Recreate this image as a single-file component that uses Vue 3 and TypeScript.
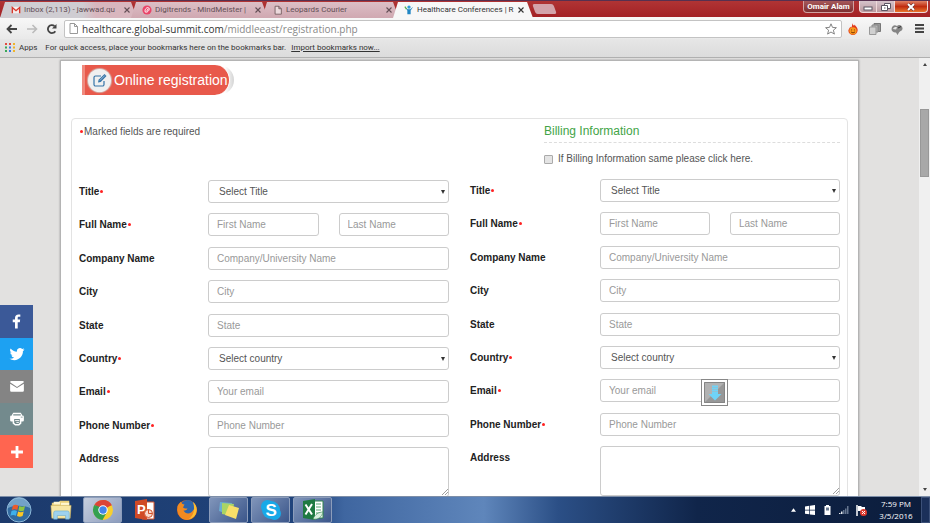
<script setup lang="ts">
import { ref } from 'vue'

interface Tab {
  title: string
  icon: 'gmail' | 'mind' | 'page' | 'health'
  active?: boolean
}

interface Field {
  key: string
  label: string
  kind: 'select' | 'name' | 'text' | 'area'
  hint: string
  required?: boolean
}

interface Column {
  id: string
  billing: boolean
}

const tabs: Tab[] = [
  { title: 'Inbox (2,113) - jawwad.qu', icon: 'gmail' },
  { title: 'Digitrends - MindMeister |', icon: 'mind' },
  { title: 'Leopards Courier', icon: 'page' },
  { title: 'Healthcare Conferences | R', icon: 'health', active: true },
]

const fields: Field[] = [
  { key: 'title', label: 'Title', kind: 'select', hint: 'Select Title', required: true },
  { key: 'name', label: 'Full Name', kind: 'name', hint: 'First Name', required: true },
  { key: 'company', label: 'Company Name', kind: 'text', hint: 'Company/University Name' },
  { key: 'city', label: 'City', kind: 'text', hint: 'City' },
  { key: 'state', label: 'State', kind: 'text', hint: 'State' },
  { key: 'country', label: 'Country', kind: 'select', hint: 'Select country', required: true },
  { key: 'email', label: 'Email', kind: 'text', hint: 'Your email', required: true },
  { key: 'phone', label: 'Phone Number', kind: 'text', hint: 'Phone Number', required: true },
  { key: 'address', label: 'Address', kind: 'area', hint: '' },
]

const columns: Column[] = [
  { id: 'contact', billing: false },
  { id: 'billing', billing: true },
]

const dots = ['#e04a3f', '#e04a3f', '#f0b429', '#3aa757', '#3b78e7', '#f0b429', '#3aa757', '#3b78e7', '#f0b429']
const sameBilling = ref(false)
const url = 'healthcare.global-summit.com'
const path = '/middleeast/registration.php'
</script>

<template>
  <div class="window">
    <header class="chrome">
      <div class="tabstrip">
        <div v-for="tab in tabs" :key="tab.title" class="tab" :class="{ active: tab.active }">
          <svg v-if="tab.icon === 'gmail'" class="fav" viewBox="0 0 12 12"><path d="M1 2h10v8H1z" fill="#f4eeee" /><path d="M1.6 10V3L6 6.800 10.400 3v7" fill="none" stroke="#d8392e" stroke-width="1.700" /></svg>
          <svg v-else-if="tab.icon === 'mind'" class="fav" viewBox="0 0 12 12"><circle cx="6" cy="6" r="5.500" fill="#ea4468" /><path d="M4 8.500C2.500 5.500 6 2 8 3.500S7 9.500 4 8.500zM5.500 7.500l2-3" fill="none" stroke="#fff" stroke-width="1.200" /></svg>
          <svg v-else-if="tab.icon === 'page'" class="fav" viewBox="0 0 12 12"><path d="M2.500 1.500h4.500l3 3v6.500h-7.500zM7 1.500v3h3" fill="#ecd9dc" stroke="#6d5559" /></svg>
          <svg v-else class="fav" viewBox="0 0 12 12"><circle cx="6" cy="2.500" r="2" fill="#2e9bd6" /><path d="M1 2l3 4.500V11h4V6.500L11 2 7.500 5h-3z" fill="#2086c4" /><path d="M1 2l2 3" stroke="#54b44a" stroke-width="1.500" /></svg>
          <span class="tab-title">{{ tab.title }}</span>
          <button class="tab-close" :aria-label="`Close ${tab.title}`">
            <svg viewBox="0 0 6 6"><path d="M.5.5l5 5M5.500.5l-5 5" stroke="currentColor" stroke-width="1.100" /></svg>
          </button>
        </div>
        <button class="new-tab" aria-label="New tab"></button>
        <div class="controls">
          <button class="profile">Omair Alam</button>
          <button class="ctl first" aria-label="Minimize"><svg viewBox="0 0 10 8"><rect x="1" y="4" width="8" height="3" fill="#fff" stroke="#5b5562" /></svg></button>
          <button class="ctl" aria-label="Restore"><svg viewBox="0 0 10 8"><path d="M3.500.5h6v5h-6z" fill="#fff" stroke="#5b5562" /><path d="M.5 2.500h6v5h-6z" fill="#fff" stroke="#5b5562" /><path d="M3 4.500h1.500v1H3z" fill="#5b5562" /></svg></button>
          <button class="ctl shut" aria-label="Close"><svg viewBox="0 0 10 8"><path d="M2 1l6 6M8 1L2 7" stroke="#5a2a2a" stroke-width="3" /><path d="M2 1l6 6M8 1L2 7" stroke="#fff" stroke-width="2" /></svg></button>
        </div>
      </div>
      <div class="toolbar">
        <button class="nav" aria-label="Back"><svg viewBox="0 0 12 10"><path d="M11 5H2M5.500 1L1.500 5l4 4" fill="none" stroke="#444" stroke-width="1.800" /></svg></button>
        <button class="nav" aria-label="Forward"><svg viewBox="0 0 12 10"><path d="M1 5h9M6.500 1l4 4-4 4" fill="none" stroke="#bbb" stroke-width="1.600" /></svg></button>
        <button class="nav" aria-label="Reload"><svg viewBox="0 0 12 10"><path d="M9.300 7.200A4 4 0 1 1 8.500 2" fill="none" stroke="#444" stroke-width="1.800" /><path d="M10.500 0v4.500H6z" fill="#444" /></svg></button>
        <div class="omnibox">
          <svg class="doc" viewBox="0 0 9 11"><path d="M1 .5h4.500L8.500 3.500v7H1zM5.500.5v3h3" fill="#fff" stroke="#999" /></svg>
          <span class="url"><b>{{ url }}</b>{{ path }}</span>
          <svg class="star" viewBox="0 0 12 12"><path d="M6 .8l1.500 3.600 3.900.3-3 2.500 1 3.900L6 9l-3.400 2.100 1-3.900-3-2.500 3.900-.3z" fill="#fff" stroke="#777" stroke-width=".9" /></svg>
        </div>
        <svg class="ext" viewBox="0 0 12 13"><path d="M5 0c.5 2 1.500 2.300 2 3 .6-.6.500-1 .500-1.500C10 4 11.500 6 11 8.500 10.500 11.500 8.500 13 6 13S1 11.500 1 8.500C1 6.500 2.500 5.500 3 4c.5.500.7.800.7 1.300C5 4 5.300 2 5 0z" fill="#e2371b" /><circle cx="6" cy="8.500" r="4" fill="#f79a1c" /><path d="M4 7.500h1M7 7.500h1M3.800 9.500c1.200 1.500 3.200 1.500 4.400 0" stroke="#7a2b00" fill="none" /></svg>
        <svg class="ext" viewBox="0 0 12 12"><path d="M5 .5h6.500v8H5z" fill="#999" stroke="#777" /><path d="M3 2h6v7H3z" fill="#b5b5b5" stroke="#888" /><path d="M.5 4h6.500v7.500H.5z" fill="#d0d0d0" stroke="#999" /></svg>
        <svg class="ext" viewBox="0 0 12 12"><path d="M.5 6C1 2 4 1.500 6 3c2-2 5-.5 5.500 2S9 8 8 9.500L6.500 12 5 9.500C3 10 .5 8.500.5 6z" fill="#858585" /><path d="M2 6c1-2 3-2.500 4-1.500L5 6.500z" fill="#e5e5e5" /><path d="M7 5l3-1.500" stroke="#333" /></svg>
        <button class="menu" aria-label="Menu"><svg viewBox="0 0 9 9"><path d="M0 1h9M0 4.500h9M0 8h9" stroke="#444" stroke-width="1.800" /></svg></button>
      </div>
      <div class="bookmarks">
        <svg class="apps" viewBox="0 0 10 9">
          <rect v-for="(c, i) in dots" :key="i" :x="(i % 3) * 4" :y="Math.floor(i / 3) * 3.5" width="2" height="2" :fill="c" />
        </svg>
        <span class="apps-label">Apps</span>
        <span>For quick access, place your bookmarks here on the bookmarks bar.</span>
        <a href="#import">Import bookmarks now...</a>
      </div>
    </header>

    <div class="viewport">
      <main class="page">
        <section class="card">
          <h1 class="badge">
            <span class="badge-body">
              <span class="badge-icon">
                <svg viewBox="0 0 16 16"><path d="M12 9v3.500a1.500 1.500 0 0 1-1.500 1.500h-7A1.500 1.500 0 0 1 2 12.500v-7A1.500 1.500 0 0 1 3.500 4H9" fill="none" stroke="#3474a8" stroke-width="1.200" /><path d="M6 10.500l.6-2.700L12.500 2l2 2-5.800 5.900z" fill="#3474a8" /><path d="M7.800 8.500l5-5" stroke="#d9e8f3" stroke-width=".6" /></svg>
              </span>
              Online registration
            </span>
          </h1>
          <form class="form" @submit.prevent>
            <div v-for="col in columns" :key="col.id" class="col" :class="col.id">
              <div v-if="!col.billing" class="intro"><i class="dot"></i>Marked fields are required</div>
              <div v-else class="intro offset">
                <h2>Billing Information</h2>
                <label class="same"><input v-model="sameBilling" type="checkbox" />If Billing Information same please click here.</label>
              </div>
              <div class="rows">
                <div v-for="f in fields" :key="f.key" class="row" :class="f.kind">
                  <label :for="`${col.id}-${f.key}`">{{ f.label }}<i v-if="f.required" class="dot"></i></label>
                  <div v-if="f.kind === 'select'" class="control pick">
                    <select :id="`${col.id}-${f.key}`"><option>{{ f.hint }}</option></select>
                  </div>
                  <div v-else-if="f.kind === 'name'" class="control pair">
                    <input :id="`${col.id}-${f.key}`" type="text" :placeholder="f.hint" />
                    <input type="text" placeholder="Last Name" aria-label="Last Name" />
                  </div>
                  <div v-else-if="f.kind === 'area'" class="control">
                    <textarea :id="`${col.id}-${f.key}`"></textarea>
                    <svg class="grip" viewBox="0 0 6 6"><path d="M0 6l6-6M3 6l3-3" stroke="#888" stroke-width=".8" /></svg>
                  </div>
                  <div v-else class="control">
                    <input :id="`${col.id}-${f.key}`" type="text" :placeholder="f.hint" />
                    <span v-if="col.billing && f.key === 'email'" class="marker">
                      <svg viewBox="0 0 21 21"><path d="M0 0h21v21H0z" fill="#989898" /><path d="M0 0h21L0 21z" fill="#b2b2b2" /><path d="M.5.5h20v20H.5z" fill="none" stroke="#858585" /><path d="M8 3.500h6V12h3.500l-6.500 6.500L4.500 12H8z" fill="#6fd3f7" /><path d="M8 5.500h6M8 7.500h6M8 9.500h6" stroke="#9db9c4" stroke-width=".6" /></svg>
                    </span>
                  </div>
                </div>
              </div>
            </div>
          </form>
        </section>
      </main>
      <div class="scrollbar">
        <i class="up"></i>
        <i class="thumb"></i>
        <i class="down"></i>
      </div>
      <nav class="share">
        <a href="#facebook" class="fb" aria-label="Facebook"><svg viewBox="4 4 24 24"><path d="M17.700 26v-9h3l.5-3.700h-3.500v-2.200c0-1 .3-1.800 1.800-1.800h1.900V6.100C21 6 20 6 18.700 6c-2.900 0-4.800 1.700-4.800 4.900v2.400h-3.200V17h3.200v9z" fill="#fff" /></svg></a>
        <a href="#twitter" class="tw" aria-label="Twitter"><svg viewBox="0 0 32 32"><path d="M28 8.600a9.900 9.900 0 0 1-2.800.8 5 5 0 0 0 2.200-2.700c-1 .6-2 1-3.100 1.200a4.900 4.900 0 0 0-8.500 3.300c0 .4 0 .8.1 1.100-4-.2-7.700-2.100-10.100-5.100a4.900 4.900 0 0 0 1.500 6.600c-.8 0-1.500-.2-2.200-.6v.1a4.900 4.900 0 0 0 3.900 4.800c-.7.200-1.400.2-2.200.1a5 5 0 0 0 4.600 3.400A9.900 9.900 0 0 1 4 23.600 13.900 13.900 0 0 0 11.500 25.800c9.100 0 14.300-7.700 14.000-14.600a10 10 0 0 0 2.500-2.600z" fill="#fff" /></svg></a>
        <a href="#mail" class="ml" aria-label="Email"><svg viewBox="0 0 32 32"><path d="M5 10a2 2 0 0 1 2-2h18a2 2 0 0 1 2 2L16 17.500z" fill="#fff" /><path d="M5 12.200l11 7 11-7V23a2 2 0 0 1-2 2H7a2 2 0 0 1-2-2z" fill="#fff" /></svg></a>
        <a href="#print" class="pr" aria-label="Print"><svg viewBox="0 0 32 32"><path d="M10 6h12l2 3v2h-2V8.500H10V11H8V9z" fill="#fff" /><path d="M7 10.500h18a2 2 0 0 1 2 2V18a2 2 0 0 1-2 2h-2v3l-3.500 3.500H13L9 23v-3H7a2 2 0 0 1-2-2v-5.500a2 2 0 0 1 2-2z" fill="#fff" /><path d="M11.500 16h9v6l-2 2h-5l-2-2z" fill="#738a8d" /><path d="M13 18.500h6.500M15 21.500h4" stroke="#fff" stroke-width="1.400" /><path d="M22 13h3" stroke="#738a8d" stroke-width="1.200" /></svg></a>
        <a href="#more" class="mo" aria-label="More"><svg viewBox="0 0 32 32"><path d="M16 6.500v19M6.500 16h19" stroke="#fff" stroke-width="4.500" /></svg></a>
      </nav>
    </div>

    <footer class="taskbar">
      <button class="task start" aria-label="Start">
        <svg viewBox="0 0 26 26"><circle cx="13" cy="13" r="12" fill="#326ba0" stroke="#8db8d8" /><path d="M2 11a11 11 0 0 1 22 0c-6-3-16-3-22 0z" fill="#8fb9d8" opacity=".7" /><path d="M7 8.500c2-1.200 3.500-1 5.300 0L11.300 13c-2-1-3.500-1-5.500 0z" fill="#ee5a28" /><path d="M13.300 8.900c2 1 3.700 1 5.700 0L18 13.500c-2 1-3.700 1-5.600 0z" fill="#8ec641" /><path d="M5.500 14c2-1 3.600-1 5.500 0l-1.100 4.700c-2-1-3.600-1-5.500 0z" fill="#3fb0ea" /><path d="M12.100 14.500c2 1 3.600 1 5.600 0l-1.100 4.600c-2 1-3.600 1-5.600 0z" fill="#fdc824" /></svg>
      </button>
      <button class="task" aria-label="Explorer">
        <svg viewBox="0 0 24 22"><path d="M2 3h7l2-2h10v18H2z" fill="#ead07a" /><path d="M4 2h7v3H4zM12 3h9v3h-9z" fill="#fff6cf" /><path d="M1 6h22l-1 14H2z" fill="#f8e7a4" stroke="#ceb058" stroke-width=".6" /><path d="M4 21v-7a2 2 0 0 1 2-2h13a2 2 0 0 1 2 2v7h-4v-4H8v4z" fill="#9ed2ee" stroke="#61a7cc" stroke-width=".6" /></svg>
      </button>
      <button class="task open current" aria-label="Chrome">
        <svg viewBox="0 0 22 22"><circle cx="11" cy="11" r="10" fill="#f7cf2f" /><path d="M11 11L2.300 6A10 10 0 0 1 19.700 6z" fill="#dc4437" /><path d="M11 1a10 10 0 0 1 8.700 5.500H11z" fill="#dc4437" /><path d="M2.300 6A10 10 0 0 0 10.500 21l4.500-8-4 2z" fill="#34a050" /><path d="M2.300 6l4.800 8 3.900 1v-6z" fill="#34a050" /><circle cx="11" cy="11" r="4.700" fill="#fff" /><circle cx="11" cy="11" r="3.700" fill="#4384ea" /></svg>
      </button>
      <button class="task" aria-label="PowerPoint">
        <svg viewBox="0 0 22 22"><path d="M8 3h12v17H8z" fill="#fff" stroke="#d4532b" /><path d="M1 2l12-2v21L1 19z" fill="#d04a25" /><text x="3" y="15" class="glyph">P</text><circle cx="14.500" cy="14.500" r="4" fill="#f7d9cd" stroke="#d4532b" /><path d="M14.500 10.500v4h4" fill="none" stroke="#d4532b" /></svg>
      </button>
      <button class="task" aria-label="Firefox">
        <svg viewBox="0 0 22 22"><circle cx="11" cy="11" r="10" fill="#e66b1e" /><circle cx="11.500" cy="8.500" r="7.500" fill="#2d65ad" /><path d="M1.500 7C3 4 4 4 5 2.500c.5 2 1.500 3 3.500 3L7 8.500c1 1 3 1 4.500 1-1 2-2.500 2-4 2 2 4 7 4 9.500 0l3-4c2 8-3 13.500-9 13.500S.5 15 1.500 7z" fill="#f18a21" /><path d="M17 3c4 3 5 9 1.500 14-2 2-4 3-6 3 5-3 7-9 4.500-17z" fill="#fbbd31" /></svg>
      </button>
      <button class="task open" aria-label="Sticky Notes">
        <svg viewBox="0 0 22 22"><path d="M2 3l12 1-2 12L1 12z" fill="#6aaed2" /><path d="M4 4l12 1-2 12-10-2z" fill="#a9d465" /><path d="M11 6l10 3-3 11-11-4z" fill="#f8df69" /></svg>
      </button>
      <button class="task open" aria-label="Skype">
        <svg viewBox="0 0 22 22"><circle cx="7.500" cy="7.500" r="6.500" fill="#18a9e8" /><circle cx="14.500" cy="14.500" r="6.500" fill="#18a9e8" /><circle cx="11" cy="11" r="9" fill="#18a9e8" /><text x="5.500" y="17" class="glyph big">S</text></svg>
      </button>
      <button class="task open" aria-label="Excel">
        <svg viewBox="0 0 22 22"><path d="M8 2h13v17H8z" fill="#fff" stroke="#30844e" /><path d="M14 5h5M14 8h5M14 11h5M14 14h5" stroke="#5aa774" /><path d="M1 2l12-2v21L1 19z" fill="#1f7a42" /><path d="M3.500 5.500l6.500 10M10 5l-6.500 10.500" stroke="#fff" stroke-width="2" /><path d="M11 20c2-5 6-7 10-7-1 5-5 8-10 7z" fill="#d9efdf" stroke="#30844e" stroke-width=".6" /></svg>
      </button>
      <div class="tray">
        <svg class="t-up" viewBox="0 0 6 4"><path d="M3 0l3 4H0z" fill="#fff" /></svg>
        <svg class="t-win" viewBox="0 0 10 10"><path d="M0 1.500l4.300-.7v4H0zM5 .7L10 0v4.800H5zM0 5.500h4.300v3.800L0 8.700zM5 5.500h5V10l-5-.6z" fill="#fff" /></svg>
        <svg class="t-bat" viewBox="0 0 7 10"><path d="M2 0h3v1h1.500v9h-6V1H2z" fill="#fff" /><path d="M2 2.500h3v3H2z" fill="#6b7b92" /></svg>
        <svg class="t-net" viewBox="0 0 10 8"><path d="M0 8V7h1.500v1zM2 8V5.500h1.500V8z" fill="#e6e9ee" /><path d="M4 8V4h1.500v4zM6 8V2.500h1.500V8zM8 8V0h1.500v8z" fill="#65758f" /></svg>
        <svg class="t-flag" viewBox="0 0 11 11"><path d="M1 0v11" stroke="#fff" stroke-width="1.500" /><path d="M2 1h3l1 1h3v5H6L5 6H2z" fill="#fff" /><circle cx="7.500" cy="7.500" r="3.500" fill="#dd3a2e" /><path d="M6 6l3 3M9 6L6 9" stroke="#fff" /></svg>
        <time class="clock"><span>7:59 PM</span><span>3/5/2016</span></time>
        <span class="peek"></span>
      </div>
    </footer>
  </div>
</template>

<style>
body {
  margin: 0;
}
</style>

<style scoped>
* {
  box-sizing: border-box;
}
button {
  padding: 0;
  border: 0;
  background: none;
  font: inherit;
  color: inherit;
}
svg {
  display: block;
}
.window {
  display: flex;
  flex-direction: column;
  height: 100vh;
  overflow: hidden;
  font-family: 'Liberation Sans', Arial, sans-serif;
  font-size: 10px;
  color: #555;
}
.chrome {
  flex: none;
  font-family: Roboto, 'Open Sans', sans-serif;
  font-size: 8px;
  color: #333;
}
.tabstrip {
  display: flex;
  height: 17px;
  padding-top: 1px;
  border-top: 1px solid #57304f;
  background: linear-gradient(#b03434, #a32125);
}
.tab {
  display: flex;
  align-items: center;
  flex: 0 1 137px;
  min-width: 0;
  height: 16px;
  margin-right: -6px;
  padding: 0 7px 1px 11px;
  background: linear-gradient(#dcbfc6, #d0a8b1);
  clip-path: polygon(5px 0, calc(100% - 6px) 0, 100% 100%, 0 100%);
  color: #634e55;
}
.tab:first-child {
  background: linear-gradient(90deg, #cfcdd2 60%, #d8b6be 70%);
}
.tab.active {
  flex-basis: 140px;
  padding-right: 9px;
  background: #f7f7f7;
  color: #333;
}
.fav {
  flex: none;
  width: 10px;
  height: 10px;
  margin-right: 3px;
}
.tab-title {
  flex: 1;
  white-space: nowrap;
}
.tab-close {
  flex: none;
  width: 6px;
  height: 6px;
}
.new-tab {
  width: 21px;
  height: 10px;
  margin: 2px 0 0 7px;
  border-radius: 2px;
  background: #d3a3aa;
  transform: skewX(20deg);
}
.controls {
  display: flex;
  height: 12px;
  margin: -1px 2px 0 auto;
}
.profile {
  width: 51px;
  margin-right: 5px;
  border: 1px solid #d0a2a2;
  border-top: 0;
  border-radius: 0 0 4px 4px;
  background: linear-gradient(#a7595b, #7d2e30);
  font-weight: 700;
  font-size: 8px;
  line-height: 10px;
  color: #fff;
}
.ctl {
  display: grid;
  place-items: center;
  width: 18px;
  border: 1px solid #f0d9da;
  border-width: 0 1px 1px 0;
  background: linear-gradient(#d5c3cb, #bb9a9f);
}
.ctl.first {
  border-left-width: 1px;
  border-radius: 0 0 0 4px;
}
.ctl.shut {
  width: 33px;
  border-radius: 0 0 4px 0;
  background: linear-gradient(#e08266, #c02c10 50%, #e8762c);
}
.ctl svg {
  width: 10px;
  height: 8px;
}
.toolbar {
  display: flex;
  align-items: center;
  height: 22px;
  padding: 2px 6px 1px 6px;
  background: linear-gradient(#f8f8f8, #e9e9e9);
}
.nav {
  width: 12px;
  height: 10px;
  margin-right: 8px;
}
.nav:nth-child(3) {
  margin-right: 6px;
}
.omnibox {
  display: flex;
  align-items: center;
  flex: 1;
  height: 18px;
  padding: 0 4px;
  border: 1px solid #c3c3c3;
  border-radius: 2px;
  background: #fff;
  margin-right: 5px;
}
.doc {
  width: 9px;
  height: 11px;
  margin-right: 4px;
}
.url {
  flex: 1;
  font-family: 'Open Sans', 'Noto Sans', sans-serif;
  font-size: 10px;
  line-height: 16px;
  color: #888;
}
.url b {
  font-weight: 400;
  color: #333;
}
.star {
  width: 12px;
  height: 12px;
}
.ext {
  width: 12px;
  height: 12px;
  margin-right: 10px;
}
.menu {
  width: 9px;
  height: 9px;
  margin-left: 2px;
}
.bookmarks {
  display: flex;
  align-items: center;
  height: 19px;
  padding: 0 5px 2px;
  border-bottom: 1px solid #b0b0b0;
  background: linear-gradient(#e6e6e6, #dcdcdc);
  white-space: nowrap;
}
.apps {
  width: 10px;
  height: 9px;
}
.apps-label {
  margin: 0 8px 0 4px;
}
.bookmarks a {
  margin-left: 5px;
  color: #333;
}
.viewport {
  position: relative;
  display: flex;
  flex: 1;
  min-height: 0;
}
.page {
  flex: 1;
  padding-top: 2px;
  background: #e2e1e0;
  overflow: hidden;
}
.card {
  max-width: 799px;
  margin: 0 auto;
  padding: 4px 10px 40px;
  border: 1px solid #b4b4b4;
  background: #fff;
  box-shadow: 0 0 2px #999;
}
.badge {
  display: flex;
  width: max-content;
  margin: 0 0 23px 11px;
  padding-right: 4px;
  border-radius: 0 16px 16px 0;
  background: linear-gradient(90deg, #fff 94%, #d4d4d4);
  font-size: 14px;
  font-weight: 400;
  line-height: 30px;
  color: #fff;
}
.badge-body {
  display: flex;
  align-items: center;
  height: 30px;
  padding: 0 1px 0 3px;
  border-left: 3px solid #f08a7e;
  border-right: 1px solid #fff;
  border-radius: 0 15px 15px 0;
  background: #e8594b;
}
.badge-icon {
  display: grid;
  place-items: center;
  width: 23px;
  height: 23px;
  margin-right: 3px;
  border-radius: 50%;
  background: #f0f0f0;
  box-shadow: 0 0 1px 1px #d5b0aa;
}
.badge-icon svg {
  width: 16px;
  height: 16px;
}
.form {
  display: grid;
  grid-template-columns: 1fr 1fr;
  gap: 21px;
  padding: 0 7px 20px;
  border: 1px solid #e3e3e3;
  border-radius: 4px;
}
.intro {
  height: 61px;
  padding-top: 6px;
  line-height: 14px;
}
.intro.offset {
  height: 60px;
  margin-left: 74px;
  padding-top: 5px;
}
.offset h2 {
  margin: 0 0 9px;
  padding-bottom: 3px;
  border-bottom: 1px dashed #ddd;
  font-size: 12px;
  font-weight: 400;
  line-height: 15px;
  color: #43a447;
}
.same {
  display: flex;
  align-items: center;
}
.same input {
  appearance: none;
  width: 9px;
  height: 9px;
  margin: 0 5px 0 0;
  border: 1px solid #aaa;
  border-radius: 1px;
  background: #e4e4e4;
}
.dot {
  display: inline-block;
  width: 3px;
  height: 3px;
  margin: 0 1px 2px;
  border-radius: 50%;
  background: #f22;
}
.rows {
  display: flex;
  flex-direction: column;
  justify-content: space-between;
  height: 317px;
}
.row {
  display: grid;
  grid-template-columns: 129px 1fr;
  align-items: center;
}
.billing .row {
  grid-template-columns: 130px 1fr;
}
.row > label {
  font-weight: 700;
  color: #222;
}
.row.area {
  align-items: start;
}
.row.area > label {
  padding-top: 6px;
}
.control {
  position: relative;
  display: grid;
}
.pair {
  grid-template-columns: 1fr 1fr;
  gap: 20px;
}
.control input,
.control select,
.control textarea {
  appearance: none;
  width: 100%;
  min-width: 0;
  height: 23px;
  margin: 0;
  padding: 0 8px;
  border: 1px solid #ccc;
  border-radius: 3px;
  background: #fff;
  font: inherit;
  color: #555;
}
.control select {
  padding: 0 10px;
}
.control textarea {
  height: 50px;
  resize: none;
}
.control input::placeholder {
  color: #999;
  opacity: 1;
}
.pick::after {
  content: '';
  position: absolute;
  top: 10px;
  right: 4px;
  border: 2px solid transparent;
  border-top: 4px solid #333;
  border-bottom: 0;
}
.grip {
  position: absolute;
  right: 1px;
  bottom: 2px;
  width: 6px;
  height: 6px;
}
.marker {
  position: absolute;
  top: 0;
  left: 101px;
  width: 27px;
  height: 27px;
  padding: 2px;
  border: 1px solid #888;
  background: #fff;
}
.marker svg {
  width: 21px;
  height: 21px;
}
.scrollbar {
  display: flex;
  flex-direction: column;
  align-items: center;
  width: 11px;
  background: #f0f0f0;
}
.up,
.down {
  border: 2px solid transparent;
}
.up {
  margin: 5px 0 43px;
  border-bottom: 3px solid #444;
  border-top: 0;
}
.down {
  margin: auto 0 5px;
  border-top: 3px solid #444;
  border-bottom: 0;
}
.thumb {
  width: 9px;
  height: 68px;
  border: 1px solid #989898;
  background: #a8a8a8;
}
.share {
  position: absolute;
  top: 247px;
  left: 0;
  display: flex;
  flex-direction: column;
  width: 33px;
  height: 163px;
}
.share a {
  display: grid;
  flex: 1;
  place-items: center;
}
.share svg {
  width: 20px;
  height: 20px;
}
.fb {
  background: #3b5998;
}
.tw {
  background: #1da1f2;
}
.ml {
  background: #848484;
}
.pr {
  background: #738a8d;
}
.mo {
  background: #ff6550;
}
.share .fb svg {
  width: 17px;
  height: 17px;
}
.taskbar {
  display: flex;
  flex: none;
  gap: 3px;
  height: 27px;
  border-top: 1px solid #7d8ea8;
  background: linear-gradient(90deg, #1c3a6c, #20447c 33%, #3f66a0 37%, #5f86bb 52%, #2b4f86 60%, #10254a 75%, #0c1d3c);
}
.task {
  display: grid;
  place-items: center;
  flex: none;
  width: 39px;
  border-radius: 2px;
}
.task svg {
  width: 22px;
  height: 22px;
}
.start {
  width: 38px;
}
.start svg {
  width: 26px;
  height: 26px;
}
.open {
  border: 1px solid #8c9dbb;
  background: linear-gradient(135deg, #8095ba, #3b568a);
}
.current {
  background: linear-gradient(135deg, #c6cedd, #8c9cbd);
}
.glyph {
  font: 700 13px 'Liberation Sans', sans-serif;
  fill: #fff;
}
.glyph.big {
  font-size: 17px;
}
.tray {
  display: flex;
  align-items: center;
  margin-left: auto;
  font-family: 'Open Sans', 'Noto Sans', sans-serif;
  font-size: 8px;
  color: #fff;
}
.t-up {
  width: 5px;
  height: 4px;
  margin-right: 9px;
}
.t-win {
  width: 10px;
  height: 10px;
  margin-right: 9px;
}
.t-bat {
  width: 7px;
  height: 10px;
  margin-right: 8px;
}
.t-net {
  width: 10px;
  height: 8px;
  margin-right: 7px;
}
.t-flag {
  width: 11px;
  height: 11px;
  margin-right: 4px;
}
.clock {
  display: grid;
  width: 50px;
  line-height: 12px;
  text-align: center;
}
.peek {
  align-self: stretch;
  width: 9px;
  border: 1px solid #3c5078;
  background: #1b305a;
}
</style>
